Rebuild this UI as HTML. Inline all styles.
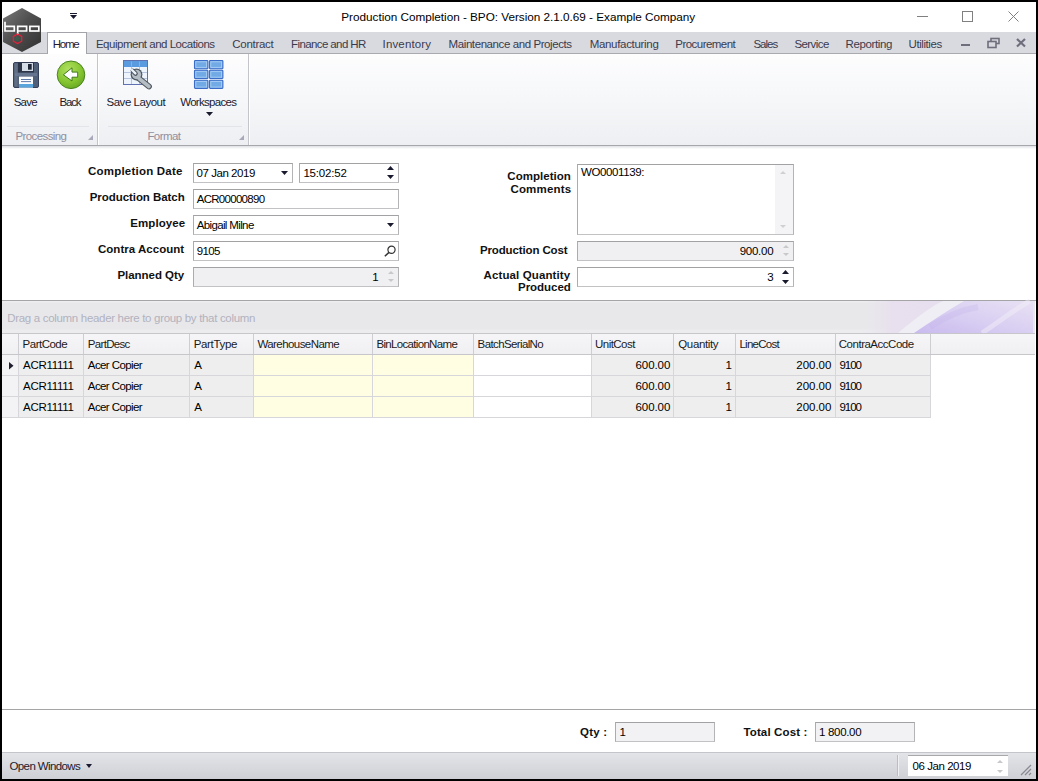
<!DOCTYPE html>
<html><head><meta charset="utf-8">
<style>
*{margin:0;padding:0;box-sizing:border-box}
html,body{width:1038px;height:781px;overflow:hidden;background:#000}
body{font-family:"Liberation Sans",sans-serif;font-size:11px;color:#000;position:relative}
.a{position:absolute}
.t{position:absolute;white-space:nowrap;line-height:normal}
svg{position:absolute;overflow:visible}
</style></head><body>
<div class="a" style="left:2px;top:2px;width:1034px;height:777px;background:#fff"></div>
<div class="a" style="left:2px;top:32px;width:1034px;height:21px;background:#d9dae0"></div>
<div class="a" style="left:2px;top:53px;width:1034px;height:1px;background:#a9aaaf"></div>
<div class="a" style="left:47px;top:32px;width:40px;height:22px;background:#fff;border:1px solid #a3a4aa;border-bottom:none"></div>
<div class="a" style="left:2px;top:54px;width:1034px;height:91px;background:linear-gradient(#fdfdfe,#f6f7f9 50%,#eeeff2)"></div>
<div class="a" style="left:2px;top:145px;width:1034px;height:1px;background:#a6a7ac"></div>
<div class="a" style="left:2px;top:146px;width:1034px;height:3px;background:linear-gradient(#dfe0e4,#fff)"></div>
<div class="a" style="left:97px;top:54px;width:1px;height:91px;background:#c4c5ca"></div>
<div class="a" style="left:98px;top:54px;width:1px;height:91px;background:#fff"></div>
<div class="a" style="left:248px;top:54px;width:1px;height:91px;background:#c4c5ca"></div>
<div class="a" style="left:249px;top:54px;width:1px;height:91px;background:#fff"></div>
<div class="a" style="left:7px;top:126px;width:82px;height:1px;background:#e3e4e8"></div>
<div class="a" style="left:108px;top:126px;width:134px;height:1px;background:#e3e4e8"></div>
<svg style="left:0;top:0" width="50" height="56" viewBox="0 0 50 56">
<defs><linearGradient id="lg" x1="0" y1="0" x2="1" y2="1"><stop offset="0" stop-color="#7a7a7a"/><stop offset="0.45" stop-color="#505050"/><stop offset="1" stop-color="#303030"/></linearGradient></defs>
<polygon points="22,8 41,18.5 41,42 22,52 3,42 3,18.5" fill="url(#lg)"/>
<g fill="none" stroke="#fff" stroke-width="1.7">
<path d="M5,21.8 V31 H14.3 V26.4 H5"/>
<path d="M17.7,35 V26.4 H26.6 V31 H17.7"/>
<rect x="29.9" y="26.4" width="8.9" height="4.6"/>
</g>
<polygon points="17.5,34 21.7,36.4 21.7,41.2 17.5,43.6 13.3,41.2 13.3,36.4" fill="none" stroke="#e8203a" stroke-width="1.2"/>
<circle cx="17.5" cy="38.8" r="2.2" fill="#2e6a4a" opacity="0.5"/>
</svg>
<div class="a" style="left:70px;top:13px;width:7px;height:1px;background:#1a1a2e"></div>
<svg style="left:70px;top:15px" width="7" height="4"><polygon points="0,0 7,0 3.5,4" fill="#1a1a2e"/></svg>
<div class="a" style="left:917px;top:16px;width:11px;height:1px;background:#808080"></div>
<div class="a" style="left:962px;top:11px;width:11px;height:11px;border:1px solid #808080"></div>
<svg style="left:1007px;top:10px" width="13" height="13"><path d="M1.5,1.5 L11.5,11.5 M11.5,1.5 L1.5,11.5" stroke="#808080" stroke-width="1"/></svg>
<div class="a" style="left:961px;top:44px;width:9px;height:2px;background:#6e6e7c"></div>
<svg style="left:986px;top:37px" width="16" height="12"><g fill="none" stroke="#6e6e7c" stroke-width="1.6"><rect x="5" y="1.5" width="8" height="5"/><rect x="2" y="4.5" width="8" height="6" fill="#d8d9df"/></g></svg>
<svg style="left:1015px;top:38px" width="12" height="10"><path d="M2,1 L10,8.5 M10,1 L2,8.5" stroke="#6e6e7c" stroke-width="2.2"/></svg>
<svg style="left:13px;top:62px" width="26" height="26" viewBox="0 0 26 26">
<rect x="0.5" y="0.5" width="25" height="25" rx="1.5" fill="#506078" stroke="#36405a"/>
<rect x="1.5" y="1.5" width="3" height="23" fill="#6a7890" opacity="0.6"/>
<rect x="5" y="0.5" width="16" height="10" fill="#2c3448"/>
<rect x="9" y="1" width="11" height="8" fill="#d6dce6"/>
<rect x="15" y="2" width="3.7" height="5.7" fill="#202838"/>
<rect x="2" y="11" width="22" height="3" fill="#6e7e98" opacity="0.7"/>
<rect x="6" y="14.6" width="14" height="11" fill="#fbfcfe"/>
<rect x="8" y="17" width="10" height="0.9" fill="#4a6aa0"/>
<rect x="8" y="19.2" width="10" height="0.9" fill="#4a6aa0"/>
<rect x="6" y="22" width="14" height="3.5" fill="#58a4dc"/>
</svg>
<svg style="left:56px;top:60px" width="30" height="30" viewBox="0 0 30 30">
<defs><radialGradient id="bg1" cx="0.4" cy="0.3" r="0.8"><stop offset="0" stop-color="#b0e060"/><stop offset="0.6" stop-color="#84c430"/><stop offset="1" stop-color="#5ea020"/></radialGradient></defs>
<circle cx="15" cy="14.8" r="13.8" fill="url(#bg1)" stroke="#4a8420" stroke-width="1"/>
<polygon points="7.4,14.8 16,7.8 16,12.1 21.7,12.1 21.7,17.2 16,17.2 16,21 " fill="#fff" stroke="#3e7a18" stroke-width="1"/>
</svg>
<svg style="left:122px;top:59px" width="32" height="32" viewBox="0 0 32 32">
<rect x="1.5" y="1.5" width="24" height="24" fill="#eef4fc" stroke="#6070b0" stroke-width="1"/>
<rect x="2" y="2" width="23" height="6" fill="#5a9ade"/><path d="M9.5,2.5 V7.5 M17.5,2.5 V7.5" stroke="#8ab8ea" stroke-width="0.8"/>
<path d="M9.5,8 V25 M17.5,8 V25 M2,13.5 H25 M2,19.5 H25" stroke="#a8b8d8" stroke-width="0.8"/>
<g stroke-linecap="round">
<path d="M17,19.5 L27,27.5" stroke="#4e565e" stroke-width="5.8"/>
<circle cx="14.5" cy="15.5" r="5.9" fill="#4e565e"/>
<path d="M17,19.5 L27,27.5" stroke="#b4bcc4" stroke-width="3.6"/>
<circle cx="14.5" cy="15.5" r="4.7" fill="#b4bcc4"/>
<path d="M10.8,11.8 L13.6,14.6" stroke="#4e565e" stroke-width="4.4"/>
<path d="M10,11 L13.4,14.4" stroke="#eef4fc" stroke-width="2.4"/>
</g>
</svg>
<svg style="left:194px;top:60px" width="30" height="30" viewBox="0 0 30 30">
<rect x="0.5" y="0.5" width="13.4" height="8.2" rx="0.8" fill="#72aae6" stroke="#3a6cc8" stroke-width="1.1"/>
<rect x="1.8" y="1.8" width="10.8" height="5.6" fill="none" stroke="#a6cdf2" stroke-width="0.9"/>
<rect x="15.5" y="0.5" width="13.4" height="8.2" rx="0.8" fill="#72aae6" stroke="#3a6cc8" stroke-width="1.1"/>
<rect x="16.8" y="1.8" width="10.8" height="5.6" fill="none" stroke="#a6cdf2" stroke-width="0.9"/>
<rect x="0.5" y="10.3" width="13.4" height="8.2" rx="0.8" fill="#72aae6" stroke="#3a6cc8" stroke-width="1.1"/>
<rect x="1.8" y="11.600000000000001" width="10.8" height="5.6" fill="none" stroke="#a6cdf2" stroke-width="0.9"/>
<rect x="15.5" y="10.3" width="13.4" height="8.2" rx="0.8" fill="#72aae6" stroke="#3a6cc8" stroke-width="1.1"/>
<rect x="16.8" y="11.600000000000001" width="10.8" height="5.6" fill="none" stroke="#a6cdf2" stroke-width="0.9"/>
<rect x="0.5" y="20.2" width="13.4" height="8.2" rx="0.8" fill="#72aae6" stroke="#3a6cc8" stroke-width="1.1"/>
<rect x="1.8" y="21.5" width="10.8" height="5.6" fill="none" stroke="#a6cdf2" stroke-width="0.9"/>
<rect x="15.5" y="20.2" width="13.4" height="8.2" rx="0.8" fill="#72aae6" stroke="#3a6cc8" stroke-width="1.1"/>
<rect x="16.8" y="21.5" width="10.8" height="5.6" fill="none" stroke="#a6cdf2" stroke-width="0.9"/></svg>
<svg style="left:206px;top:112px" width="7" height="4"><polygon points="0,0 7,0 3.5,4" fill="#1a1a2e"/></svg>
<svg style="left:88px;top:135px" width="6" height="6"><polygon points="5,0 5,5 0,5" fill="#a8a8b8"/></svg>
<svg style="left:239px;top:135px" width="6" height="6"><polygon points="5,0 5,5 0,5" fill="#a8a8b8"/></svg>
<div class="a" style="left:193px;top:163px;width:100px;height:20px;background:#fff;border:1px solid;border-color:#a2a2a4 #b4b4b6 #c2c2c4 #acacae"></div>
<div class="a" style="left:299px;top:163px;width:100px;height:20px;background:#fff;border:1px solid;border-color:#a2a2a4 #b4b4b6 #c2c2c4 #acacae"></div>
<div class="a" style="left:193px;top:189px;width:206px;height:20px;background:#fff;border:1px solid;border-color:#a2a2a4 #b4b4b6 #c2c2c4 #acacae"></div>
<div class="a" style="left:193px;top:215px;width:206px;height:20px;background:#fff;border:1px solid;border-color:#a2a2a4 #b4b4b6 #c2c2c4 #acacae"></div>
<div class="a" style="left:193px;top:241px;width:206px;height:20px;background:#fff;border:1px solid;border-color:#a2a2a4 #b4b4b6 #c2c2c4 #acacae"></div>
<div class="a" style="left:193px;top:267px;width:206px;height:20px;background:#f0f0f3;border:1px solid;border-color:#a2a2a4 #b4b4b6 #c2c2c4 #acacae"></div>
<div class="a" style="left:577px;top:164px;width:217px;height:71px;background:#fff;border:1px solid;border-color:#a2a2a4 #b4b4b6 #c2c2c4 #acacae"></div>
<div class="a" style="left:775px;top:165px;width:18px;height:69px;background:#f4f4f6"></div>
<div class="a" style="left:577px;top:241px;width:217px;height:20px;background:#f0f0f3;border:1px solid;border-color:#a2a2a4 #b4b4b6 #c2c2c4 #acacae"></div>
<div class="a" style="left:577px;top:267px;width:217px;height:20px;background:#fff;border:1px solid;border-color:#a2a2a4 #b4b4b6 #c2c2c4 #acacae"></div>
<svg style="left:281px;top:171px" width="7" height="4"><polygon points="0,0 7,0 3.5,4" fill="#1a1a2e"/></svg>
<svg style="left:387px;top:166px" width="7" height="4"><polygon points="0,4 7,4 3.5,0" fill="#1a1a2e"/></svg>
<svg style="left:387px;top:175px" width="7" height="4"><polygon points="0,0 7,0 3.5,4" fill="#1a1a2e"/></svg>
<svg style="left:387px;top:223px" width="7" height="4"><polygon points="0,0 7,0 3.5,4" fill="#1a1a2e"/></svg>
<svg style="left:383px;top:245px" width="14" height="12"><circle cx="8.5" cy="4.8" r="3.6" fill="none" stroke="#333" stroke-width="1.2"/><path d="M6,7.4 L1.8,11.2" stroke="#333" stroke-width="1.5"/></svg>
<svg style="left:388px;top:271px" width="6" height="3"><polygon points="0,3 6,3 3.0,0" fill="#c8c8cc"/></svg>
<svg style="left:388px;top:279px" width="6" height="3"><polygon points="0,0 6,0 3.0,3" fill="#c8c8cc"/></svg>
<svg style="left:783px;top:245px" width="6" height="3"><polygon points="0,3 6,3 3.0,0" fill="#c8c8cc"/></svg>
<svg style="left:783px;top:253px" width="6" height="3"><polygon points="0,0 6,0 3.0,3" fill="#c8c8cc"/></svg>
<svg style="left:782px;top:270px" width="7" height="4"><polygon points="0,4 7,4 3.5,0" fill="#1a1a2e"/></svg>
<svg style="left:782px;top:280px" width="7" height="4"><polygon points="0,0 7,0 3.5,4" fill="#1a1a2e"/></svg>
<svg style="left:780px;top:171px" width="6" height="3"><polygon points="0,3 6,3 3.0,0" fill="#d0d0d4"/></svg>
<svg style="left:780px;top:225px" width="6" height="3"><polygon points="0,0 6,0 3.0,3" fill="#d0d0d4"/></svg>
<div class="a" style="left:2px;top:300px;width:1034px;height:1px;background:#a5a5a8"></div>
<div class="a" style="left:2px;top:301px;width:1033px;height:32px;background:linear-gradient(#eeeef1 0px,#eeeef1 1px,#e8e8eb 2px,#e8e8eb 28px,#ececef 29px,#ececef 32px)"></div>
<svg style="left:860px;top:301px" width="175" height="32" viewBox="0 0 175 32">
<defs>
<linearGradient id="sw0" x1="0" y1="0" x2="1" y2="0"><stop offset="0" stop-color="#e9e9ec" stop-opacity="0"/><stop offset="0.18" stop-color="#e8e0ee"/><stop offset="1" stop-color="#e4ddf0"/></linearGradient>
<linearGradient id="sw1" x1="0" y1="1" x2="1" y2="0"><stop offset="0" stop-color="#c9baee"/><stop offset="0.45" stop-color="#d8cef2"/><stop offset="1" stop-color="#e8e2f4"/></linearGradient>
</defs>
<rect x="0" y="0" width="175" height="32" fill="url(#sw0)"/>
<path d="M38,32 C55,18 70,6 83,0 L105,0 C90,8 72,20 55,32 Z" fill="#efeff5" opacity="0.9"/>
<path d="M54,32 C72,20 90,8 104,0 L175,0 L175,32 Z" fill="url(#sw1)"/>
<path d="M70,26 C85,16 100,9 118,6" stroke="#c4b4ec" stroke-width="6" fill="none" opacity="0.3"/>
<path d="M122,32 C140,20 155,8 170,0" stroke="#f2eef8" stroke-width="5" fill="none" opacity="0.5"/>
<rect x="173" y="0" width="2" height="32" fill="#e8e8ec"/>
</svg>
<div class="a" style="left:2px;top:333px;width:1033px;height:21px;background:linear-gradient(#f6f6f8,#f0f0f3)"></div>
<div class="a" style="left:2px;top:333px;width:1033px;height:1px;background:#c6c6cb"></div>
<div class="a" style="left:2px;top:354px;width:1033px;height:1px;background:#c6c6cb"></div>
<div class="a" style="left:18px;top:334px;width:1px;height:20px;background:#cdcdd2"></div>
<div class="a" style="left:83px;top:334px;width:1px;height:20px;background:#cdcdd2"></div>
<div class="a" style="left:189px;top:334px;width:1px;height:20px;background:#cdcdd2"></div>
<div class="a" style="left:253px;top:334px;width:1px;height:20px;background:#cdcdd2"></div>
<div class="a" style="left:372px;top:334px;width:1px;height:20px;background:#cdcdd2"></div>
<div class="a" style="left:473px;top:334px;width:1px;height:20px;background:#cdcdd2"></div>
<div class="a" style="left:591px;top:334px;width:1px;height:20px;background:#cdcdd2"></div>
<div class="a" style="left:673px;top:334px;width:1px;height:20px;background:#cdcdd2"></div>
<div class="a" style="left:735px;top:334px;width:1px;height:20px;background:#cdcdd2"></div>
<div class="a" style="left:835px;top:334px;width:1px;height:20px;background:#cdcdd2"></div>
<div class="a" style="left:930px;top:334px;width:1px;height:20px;background:#cdcdd2"></div>
<div class="a" style="left:2px;top:355px;width:16px;height:20px;background:#f3f3f5"></div>
<div class="a" style="left:19px;top:355px;width:64px;height:20px;background:#eeeeee"></div>
<div class="a" style="left:84px;top:355px;width:105px;height:20px;background:#eeeeee"></div>
<div class="a" style="left:190px;top:355px;width:63px;height:20px;background:#eeeeee"></div>
<div class="a" style="left:254px;top:355px;width:118px;height:20px;background:#fffde2"></div>
<div class="a" style="left:373px;top:355px;width:100px;height:20px;background:#fffde2"></div>
<div class="a" style="left:474px;top:355px;width:117px;height:20px;background:#ffffff"></div>
<div class="a" style="left:592px;top:355px;width:81px;height:20px;background:#eeeeee"></div>
<div class="a" style="left:674px;top:355px;width:61px;height:20px;background:#eeeeee"></div>
<div class="a" style="left:736px;top:355px;width:99px;height:20px;background:#eeeeee"></div>
<div class="a" style="left:836px;top:355px;width:94px;height:20px;background:#eeeeee"></div>
<div class="a" style="left:2px;top:375px;width:929px;height:1px;background:#d6d6db"></div>
<div class="a" style="left:18px;top:355px;width:1px;height:21px;background:#d6d6db"></div>
<div class="a" style="left:83px;top:355px;width:1px;height:21px;background:#d6d6db"></div>
<div class="a" style="left:189px;top:355px;width:1px;height:21px;background:#d6d6db"></div>
<div class="a" style="left:253px;top:355px;width:1px;height:21px;background:#d6d6db"></div>
<div class="a" style="left:372px;top:355px;width:1px;height:21px;background:#d6d6db"></div>
<div class="a" style="left:473px;top:355px;width:1px;height:21px;background:#d6d6db"></div>
<div class="a" style="left:591px;top:355px;width:1px;height:21px;background:#d6d6db"></div>
<div class="a" style="left:673px;top:355px;width:1px;height:21px;background:#d6d6db"></div>
<div class="a" style="left:735px;top:355px;width:1px;height:21px;background:#d6d6db"></div>
<div class="a" style="left:835px;top:355px;width:1px;height:21px;background:#d6d6db"></div>
<div class="a" style="left:930px;top:355px;width:1px;height:21px;background:#d6d6db"></div>
<div class="a" style="left:2px;top:376px;width:16px;height:20px;background:#f3f3f5"></div>
<div class="a" style="left:19px;top:376px;width:64px;height:20px;background:#eeeeee"></div>
<div class="a" style="left:84px;top:376px;width:105px;height:20px;background:#eeeeee"></div>
<div class="a" style="left:190px;top:376px;width:63px;height:20px;background:#eeeeee"></div>
<div class="a" style="left:254px;top:376px;width:118px;height:20px;background:#fffde2"></div>
<div class="a" style="left:373px;top:376px;width:100px;height:20px;background:#fffde2"></div>
<div class="a" style="left:474px;top:376px;width:117px;height:20px;background:#ffffff"></div>
<div class="a" style="left:592px;top:376px;width:81px;height:20px;background:#eeeeee"></div>
<div class="a" style="left:674px;top:376px;width:61px;height:20px;background:#eeeeee"></div>
<div class="a" style="left:736px;top:376px;width:99px;height:20px;background:#eeeeee"></div>
<div class="a" style="left:836px;top:376px;width:94px;height:20px;background:#eeeeee"></div>
<div class="a" style="left:2px;top:396px;width:929px;height:1px;background:#d6d6db"></div>
<div class="a" style="left:18px;top:376px;width:1px;height:21px;background:#d6d6db"></div>
<div class="a" style="left:83px;top:376px;width:1px;height:21px;background:#d6d6db"></div>
<div class="a" style="left:189px;top:376px;width:1px;height:21px;background:#d6d6db"></div>
<div class="a" style="left:253px;top:376px;width:1px;height:21px;background:#d6d6db"></div>
<div class="a" style="left:372px;top:376px;width:1px;height:21px;background:#d6d6db"></div>
<div class="a" style="left:473px;top:376px;width:1px;height:21px;background:#d6d6db"></div>
<div class="a" style="left:591px;top:376px;width:1px;height:21px;background:#d6d6db"></div>
<div class="a" style="left:673px;top:376px;width:1px;height:21px;background:#d6d6db"></div>
<div class="a" style="left:735px;top:376px;width:1px;height:21px;background:#d6d6db"></div>
<div class="a" style="left:835px;top:376px;width:1px;height:21px;background:#d6d6db"></div>
<div class="a" style="left:930px;top:376px;width:1px;height:21px;background:#d6d6db"></div>
<div class="a" style="left:2px;top:397px;width:16px;height:20px;background:#f3f3f5"></div>
<div class="a" style="left:19px;top:397px;width:64px;height:20px;background:#eeeeee"></div>
<div class="a" style="left:84px;top:397px;width:105px;height:20px;background:#eeeeee"></div>
<div class="a" style="left:190px;top:397px;width:63px;height:20px;background:#eeeeee"></div>
<div class="a" style="left:254px;top:397px;width:118px;height:20px;background:#fffde2"></div>
<div class="a" style="left:373px;top:397px;width:100px;height:20px;background:#fffde2"></div>
<div class="a" style="left:474px;top:397px;width:117px;height:20px;background:#ffffff"></div>
<div class="a" style="left:592px;top:397px;width:81px;height:20px;background:#eeeeee"></div>
<div class="a" style="left:674px;top:397px;width:61px;height:20px;background:#eeeeee"></div>
<div class="a" style="left:736px;top:397px;width:99px;height:20px;background:#eeeeee"></div>
<div class="a" style="left:836px;top:397px;width:94px;height:20px;background:#eeeeee"></div>
<div class="a" style="left:2px;top:417px;width:929px;height:1px;background:#d6d6db"></div>
<div class="a" style="left:18px;top:397px;width:1px;height:21px;background:#d6d6db"></div>
<div class="a" style="left:83px;top:397px;width:1px;height:21px;background:#d6d6db"></div>
<div class="a" style="left:189px;top:397px;width:1px;height:21px;background:#d6d6db"></div>
<div class="a" style="left:253px;top:397px;width:1px;height:21px;background:#d6d6db"></div>
<div class="a" style="left:372px;top:397px;width:1px;height:21px;background:#d6d6db"></div>
<div class="a" style="left:473px;top:397px;width:1px;height:21px;background:#d6d6db"></div>
<div class="a" style="left:591px;top:397px;width:1px;height:21px;background:#d6d6db"></div>
<div class="a" style="left:673px;top:397px;width:1px;height:21px;background:#d6d6db"></div>
<div class="a" style="left:735px;top:397px;width:1px;height:21px;background:#d6d6db"></div>
<div class="a" style="left:835px;top:397px;width:1px;height:21px;background:#d6d6db"></div>
<div class="a" style="left:930px;top:397px;width:1px;height:21px;background:#d6d6db"></div>
<svg style="left:9px;top:362px" width="5" height="8"><polygon points="0,0 4.5,3.75 0,7.5" fill="#1e1e2e"/></svg>
<div class="a" style="left:2px;top:709px;width:1034px;height:1px;background:#a5a5a8"></div>
<div class="a" style="left:615px;top:722px;width:100px;height:20px;background:#f2f2f5;border:1px solid;border-color:#a2a2a4 #b4b4b6 #c2c2c4 #acacae"></div>
<div class="a" style="left:815px;top:722px;width:100px;height:20px;background:#f2f2f5;border:1px solid;border-color:#a2a2a4 #b4b4b6 #c2c2c4 #acacae"></div>
<div class="a" style="left:2px;top:752px;width:1034px;height:27px;background:linear-gradient(#e4e5e9,#cfd0d5)"></div>
<div class="a" style="left:2px;top:752px;width:1034px;height:1px;background:#c4c5ca"></div>
<div class="a" style="left:908px;top:755px;width:100px;height:21px;background:#fff;border-top:1px solid #a8a8ac"></div>
<svg style="left:86px;top:764px" width="6" height="4"><polygon points="0,0 6,0 3,4" fill="#1a1a2e"/></svg>
<div class="a" style="left:897px;top:755px;width:1px;height:21px;background:#bcbdc2"></div>
<div class="a" style="left:898px;top:755px;width:1px;height:21px;background:#f0f0f2"></div>
<svg style="left:997px;top:760px" width="6" height="3"><polygon points="0,3 6,3 3.0,0" fill="#c8c8cc"/></svg>
<svg style="left:997px;top:770px" width="6" height="3"><polygon points="0,0 6,0 3.0,3" fill="#c8c8cc"/></svg>
<svg style="left:1019px;top:763px" width="14" height="14"><path d="M2,12 L12,2 M6,12 L12,6 M10,12 L12,10" stroke="#8a8a92" stroke-width="1.2"/></svg>
<div class="t" style="left:341.30px;top:10px;font-size:11.75px;font-weight:normal;color:#000;letter-spacing:-0.023px;">Production Completion - BPO: Version 2.1.0.69 - Example Company</div>
<div class="t" style="left:52.70px;top:38px;font-size:11.5px;font-weight:normal;color:#1c1c3a;letter-spacing:-1.227px;">Home</div>
<div class="t" style="left:95.90px;top:38px;font-size:11.5px;font-weight:normal;color:#3a3a4e;letter-spacing:-0.483px;">Equipment and Locations</div>
<div class="t" style="left:232.30px;top:38px;font-size:11.5px;font-weight:normal;color:#3a3a4e;letter-spacing:-0.295px;">Contract</div>
<div class="t" style="left:291.00px;top:38px;font-size:11.5px;font-weight:normal;color:#3a3a4e;letter-spacing:-0.600px;">Finance and HR</div>
<div class="t" style="left:382.60px;top:38px;font-size:11.5px;font-weight:normal;color:#3a3a4e;letter-spacing:0.143px;">Inventory</div>
<div class="t" style="left:448.60px;top:38px;font-size:11.5px;font-weight:normal;color:#3a3a4e;letter-spacing:-0.414px;">Maintenance and Projects</div>
<div class="t" style="left:589.70px;top:38px;font-size:11.5px;font-weight:normal;color:#3a3a4e;letter-spacing:-0.315px;">Manufacturing</div>
<div class="t" style="left:675.30px;top:38px;font-size:11.5px;font-weight:normal;color:#3a3a4e;letter-spacing:-0.534px;">Procurement</div>
<div class="t" style="left:753.40px;top:38px;font-size:11.5px;font-weight:normal;color:#3a3a4e;letter-spacing:-0.979px;">Sales</div>
<div class="t" style="left:794.40px;top:38px;font-size:11.5px;font-weight:normal;color:#3a3a4e;letter-spacing:-0.558px;">Service</div>
<div class="t" style="left:845.50px;top:38px;font-size:11.5px;font-weight:normal;color:#3a3a4e;letter-spacing:-0.371px;">Reporting</div>
<div class="t" style="left:908.60px;top:38px;font-size:11.5px;font-weight:normal;color:#3a3a4e;letter-spacing:-0.439px;">Utilities</div>
<div class="t" style="left:13.70px;top:96px;font-size:11.5px;font-weight:normal;color:#1a1a30;letter-spacing:-0.739px;">Save</div>
<div class="t" style="left:59.60px;top:96px;font-size:11.5px;font-weight:normal;color:#1a1a30;letter-spacing:-1.205px;">Back</div>
<div class="t" style="left:106.50px;top:96px;font-size:11.5px;font-weight:normal;color:#1a1a30;letter-spacing:-0.474px;">Save Layout</div>
<div class="t" style="left:180.20px;top:96px;font-size:11.5px;font-weight:normal;color:#1a1a30;letter-spacing:-0.701px;">Workspaces</div>
<div class="t" style="left:15.50px;top:130px;font-size:11.5px;font-weight:normal;color:#8f8fa0;letter-spacing:-0.610px;">Processing</div>
<div class="t" style="left:147.40px;top:130px;font-size:11.5px;font-weight:normal;color:#8f8fa0;letter-spacing:-0.585px;">Format</div>
<div class="t" style="left:88.00px;top:165px;font-size:11.5px;font-weight:bold;color:#111;letter-spacing:0.216px;">Completion Date</div>
<div class="t" style="left:89.70px;top:191px;font-size:11.5px;font-weight:bold;color:#111;letter-spacing:-0.054px;">Production Batch</div>
<div class="t" style="left:130.30px;top:217px;font-size:11.5px;font-weight:bold;color:#111;letter-spacing:0.067px;">Employee</div>
<div class="t" style="left:98.00px;top:243px;font-size:11.5px;font-weight:bold;color:#111;letter-spacing:0.022px;">Contra Account</div>
<div class="t" style="left:117.50px;top:269px;font-size:11.5px;font-weight:bold;color:#111;letter-spacing:-0.050px;">Planned Qty</div>
<div class="t" style="left:507.30px;top:170px;font-size:11.5px;font-weight:bold;color:#111;letter-spacing:0.031px;">Completion</div>
<div class="t" style="left:510.40px;top:183px;font-size:11.5px;font-weight:bold;color:#111;letter-spacing:0.196px;">Comments</div>
<div class="t" style="left:479.90px;top:244px;font-size:11.5px;font-weight:bold;color:#111;letter-spacing:-0.122px;">Production Cost</div>
<div class="t" style="left:483.50px;top:269px;font-size:11.5px;font-weight:bold;color:#111;letter-spacing:0.122px;">Actual Quantity</div>
<div class="t" style="left:518.00px;top:281px;font-size:11.5px;font-weight:bold;color:#111;letter-spacing:-0.030px;">Produced</div>
<div class="t" style="left:196.60px;top:167px;font-size:11.5px;font-weight:normal;color:#000;letter-spacing:-0.461px;">07 Jan 2019</div>
<div class="t" style="left:303.40px;top:167px;font-size:11.5px;font-weight:normal;color:#000;letter-spacing:-0.196px;">15:02:52</div>
<div class="t" style="left:196.70px;top:193px;font-size:11.5px;font-weight:normal;color:#000;letter-spacing:-0.705px;">ACR00000890</div>
<div class="t" style="left:196.70px;top:219px;font-size:11.5px;font-weight:normal;color:#000;letter-spacing:-0.634px;">Abigail Milne</div>
<div class="t" style="left:196.70px;top:245px;font-size:11.5px;font-weight:normal;color:#000;letter-spacing:-0.629px;">9105</div>
<div class="t" style="left:372.30px;top:271px;font-size:11.5px;font-weight:normal;color:#000;letter-spacing:0.000px;">1</div>
<div class="t" style="left:581.00px;top:166px;font-size:11.5px;font-weight:normal;color:#000;letter-spacing:-0.391px;">WO0001139:</div>
<div class="t" style="left:739.70px;top:245px;font-size:11.5px;font-weight:normal;color:#000;letter-spacing:-0.256px;">900.00</div>
<div class="t" style="left:767.20px;top:271px;font-size:11.5px;font-weight:normal;color:#000;letter-spacing:0.000px;">3</div>
<div class="t" style="left:7.30px;top:312px;font-size:11.5px;font-weight:normal;color:#b2b2be;letter-spacing:-0.318px;">Drag a column header here to group by that column</div>
<div class="t" style="left:22.60px;top:338px;font-size:11.5px;font-weight:normal;color:#1a1a1a;letter-spacing:-0.512px;">PartCode</div>
<div class="t" style="left:87.80px;top:338px;font-size:11.5px;font-weight:normal;color:#1a1a1a;letter-spacing:-0.677px;">PartDesc</div>
<div class="t" style="left:193.70px;top:338px;font-size:11.5px;font-weight:normal;color:#1a1a1a;letter-spacing:-0.332px;">PartType</div>
<div class="t" style="left:257.40px;top:338px;font-size:11.5px;font-weight:normal;color:#1a1a1a;letter-spacing:-0.563px;">WarehouseName</div>
<div class="t" style="left:376.40px;top:338px;font-size:11.5px;font-weight:normal;color:#1a1a1a;letter-spacing:-0.670px;">BinLocationName</div>
<div class="t" style="left:477.60px;top:338px;font-size:11.5px;font-weight:normal;color:#1a1a1a;letter-spacing:-0.618px;">BatchSerialNo</div>
<div class="t" style="left:595.00px;top:338px;font-size:11.5px;font-weight:normal;color:#1a1a1a;letter-spacing:-0.529px;">UnitCost</div>
<div class="t" style="left:678.30px;top:338px;font-size:11.5px;font-weight:normal;color:#1a1a1a;letter-spacing:-0.368px;">Quantity</div>
<div class="t" style="left:739.40px;top:338px;font-size:11.5px;font-weight:normal;color:#1a1a1a;letter-spacing:-0.728px;">LineCost</div>
<div class="t" style="left:838.80px;top:338px;font-size:11.5px;font-weight:normal;color:#1a1a1a;letter-spacing:-0.490px;">ContraAccCode</div>
<div class="t" style="left:23.00px;top:359px;font-size:11.5px;font-weight:normal;color:#000;letter-spacing:-0.278px;">ACR11111</div>
<div class="t" style="left:87.80px;top:359px;font-size:11.5px;font-weight:normal;color:#000;letter-spacing:-0.589px;">Acer Copier</div>
<div class="t" style="left:194.20px;top:359px;font-size:11.5px;font-weight:normal;color:#000;letter-spacing:0.000px;">A</div>
<div class="t" style="left:635.50px;top:359px;font-size:11.5px;font-weight:normal;color:#000;letter-spacing:-0.076px;">600.00</div>
<div class="t" style="left:725.60px;top:359px;font-size:11.5px;font-weight:normal;color:#000;letter-spacing:0.000px;">1</div>
<div class="t" style="left:796.30px;top:359px;font-size:11.5px;font-weight:normal;color:#000;letter-spacing:-0.016px;">200.00</div>
<div class="t" style="left:839.50px;top:359px;font-size:11.5px;font-weight:normal;color:#000;letter-spacing:-1.062px;">9100</div>
<div class="t" style="left:23.00px;top:380px;font-size:11.5px;font-weight:normal;color:#000;letter-spacing:-0.278px;">ACR11111</div>
<div class="t" style="left:87.80px;top:380px;font-size:11.5px;font-weight:normal;color:#000;letter-spacing:-0.589px;">Acer Copier</div>
<div class="t" style="left:194.20px;top:380px;font-size:11.5px;font-weight:normal;color:#000;letter-spacing:0.000px;">A</div>
<div class="t" style="left:635.50px;top:380px;font-size:11.5px;font-weight:normal;color:#000;letter-spacing:-0.076px;">600.00</div>
<div class="t" style="left:725.60px;top:380px;font-size:11.5px;font-weight:normal;color:#000;letter-spacing:0.000px;">1</div>
<div class="t" style="left:796.30px;top:380px;font-size:11.5px;font-weight:normal;color:#000;letter-spacing:-0.016px;">200.00</div>
<div class="t" style="left:839.50px;top:380px;font-size:11.5px;font-weight:normal;color:#000;letter-spacing:-1.062px;">9100</div>
<div class="t" style="left:23.00px;top:401px;font-size:11.5px;font-weight:normal;color:#000;letter-spacing:-0.278px;">ACR11111</div>
<div class="t" style="left:87.80px;top:401px;font-size:11.5px;font-weight:normal;color:#000;letter-spacing:-0.589px;">Acer Copier</div>
<div class="t" style="left:194.20px;top:401px;font-size:11.5px;font-weight:normal;color:#000;letter-spacing:0.000px;">A</div>
<div class="t" style="left:635.50px;top:401px;font-size:11.5px;font-weight:normal;color:#000;letter-spacing:-0.076px;">600.00</div>
<div class="t" style="left:725.60px;top:401px;font-size:11.5px;font-weight:normal;color:#000;letter-spacing:0.000px;">1</div>
<div class="t" style="left:796.30px;top:401px;font-size:11.5px;font-weight:normal;color:#000;letter-spacing:-0.016px;">200.00</div>
<div class="t" style="left:839.50px;top:401px;font-size:11.5px;font-weight:normal;color:#000;letter-spacing:-1.062px;">9100</div>
<div class="t" style="left:580.00px;top:726px;font-size:11.5px;font-weight:bold;color:#111;letter-spacing:0.209px;">Qty :</div>
<div class="t" style="left:619.60px;top:726px;font-size:11.5px;font-weight:normal;color:#000;letter-spacing:0.000px;">1</div>
<div class="t" style="left:743.40px;top:726px;font-size:11.5px;font-weight:bold;color:#111;letter-spacing:0.149px;">Total Cost :</div>
<div class="t" style="left:819.00px;top:726px;font-size:11.5px;font-weight:normal;color:#000;letter-spacing:-0.310px;">1 800.00</div>
<div class="t" style="left:9.50px;top:760px;font-size:11.5px;font-weight:normal;color:#1a1a30;letter-spacing:-0.612px;">Open Windows</div>
<div class="t" style="left:912.50px;top:760px;font-size:11.5px;font-weight:normal;color:#000;letter-spacing:-0.441px;">06 Jan 2019</div>
</body></html>
